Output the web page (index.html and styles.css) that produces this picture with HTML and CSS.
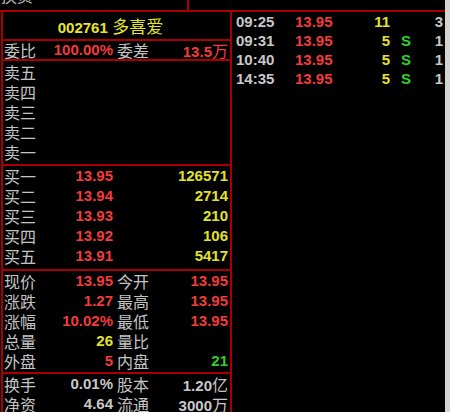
FILE: index.html
```html
<!DOCTYPE html>
<html lang="zh-CN">
<head>
<meta charset="utf-8">
<title>002761 多喜爱</title>
<link rel="stylesheet" href="styles.css">
</head>
<body>
<div class="screen">
  <div class="content">
    <div class="topstrip">
      <div class="prev">
        <span class="lbl">换资</span>
        <span class="num green pv1">13.95</span>
        <span class="num red pv2">1.75</span>
      </div>
    </div>
    <div class="main">
      <div class="quote">
        <div class="title"><span class="code">002761</span> <span class="name">多喜爱</span></div>
        <div class="grid ratio">
          <span class="lbl">委比</span><span class="num red">100.00%</span><span class="lbl l2">委差</span><span class="num red">13.5<span class="unit">万</span></span>
        </div>
        <div class="block sell">
          <div class="grid"><span class="lbl">卖五</span></div>
          <div class="grid"><span class="lbl">卖四</span></div>
          <div class="grid"><span class="lbl">卖三</span></div>
          <div class="grid"><span class="lbl">卖二</span></div>
          <div class="grid"><span class="lbl">卖一</span></div>
        </div>
        <div class="block buy">
          <div class="grid"><span class="lbl">买一</span><span class="num red">13.95</span><span></span><span class="num yellow">126571</span></div>
          <div class="grid"><span class="lbl">买二</span><span class="num red">13.94</span><span></span><span class="num yellow">2714</span></div>
          <div class="grid"><span class="lbl">买三</span><span class="num red">13.93</span><span></span><span class="num yellow">210</span></div>
          <div class="grid"><span class="lbl">买四</span><span class="num red">13.92</span><span></span><span class="num yellow">106</span></div>
          <div class="grid"><span class="lbl">买五</span><span class="num red">13.91</span><span></span><span class="num yellow">5417</span></div>
        </div>
        <div class="block stats">
          <div class="grid"><span class="lbl">现价</span><span class="num red">13.95</span><span class="lbl l2">今开</span><span class="num red">13.95</span></div>
          <div class="grid"><span class="lbl">涨跌</span><span class="num red">1.27</span><span class="lbl l2">最高</span><span class="num red">13.95</span></div>
          <div class="grid"><span class="lbl">涨幅</span><span class="num red">10.02%</span><span class="lbl l2">最低</span><span class="num red">13.95</span></div>
          <div class="grid"><span class="lbl">总量</span><span class="num yellow">26</span><span class="lbl l2">量比</span><span class="num"></span></div>
          <div class="grid"><span class="lbl">外盘</span><span class="num red">5</span><span class="lbl l2">内盘</span><span class="num green">21</span></div>
        </div>
        <div class="block shares">
          <div class="grid"><span class="lbl">换手</span><span class="num gray">0.01%</span><span class="lbl l2">股本</span><span class="num gray">1.20<span class="unit">亿</span></span></div>
          <div class="grid"><span class="lbl">净资</span><span class="num gray">4.64</span><span class="lbl l2">流通</span><span class="num gray">3000<span class="unit">万</span></span></div>
        </div>
      </div>
      <div class="ticks">
        <div class="tick"><span class="time">09:25</span><span class="num red left">13.95</span><span class="num yellow">11</span><span class="side"></span><span class="num gray">3</span></div>
        <div class="tick"><span class="time">09:31</span><span class="num red left">13.95</span><span class="num yellow">5</span><span class="side">S</span><span class="num gray">1</span></div>
        <div class="tick"><span class="time">10:40</span><span class="num red left">13.95</span><span class="num yellow">5</span><span class="side">S</span><span class="num gray">1</span></div>
        <div class="tick"><span class="time">14:35</span><span class="num red left">13.95</span><span class="num yellow">5</span><span class="side">S</span><span class="num gray">1</span></div>
      </div>
    </div>
  </div>
  <div class="scrollbar"></div>
</div>
</body>
</html>
```
FILE: styles.css
```css
html, body {
  margin: 0;
  padding: 0;
  background: #000;
}
body {
  width: 450px;
  height: 412px;
  overflow: hidden;
  font-family: "Liberation Sans", "Noto Sans CJK SC", sans-serif;
}
.screen {
  display: flex;
  width: 450px;
  height: 412px;
  overflow: hidden;
}
.content {
  flex: 1;
  display: flex;
  flex-direction: column;
  min-width: 0;
}
.scrollbar {
  width: 5px;
  background: #d4d4d4;
}
.topstrip {
  height: 10px;
  overflow: hidden;
  flex: none;
}
.prev {
  width: 187px;
  height: 10px;
  border-right: 2px solid #a80000;
  display: flex;
  align-items: flex-end;
  overflow: hidden;
}
.prev > span {
  line-height: 20px;
  height: 20px;
  margin-top: -10px;
  flex: none;
  position: relative;
  top: -5px;
}
.prev .pv1 { margin-left: 50px; }
.prev .pv2 { margin-left: 38px; }

.main {
  flex: 1;
  display: flex;
  border-top: 2px solid #a80000;
  min-height: 0;
}
.quote {
  width: 227px;
  margin-left: 1px;
  border-left: 2px solid #a80000;
  border-right: 2px solid #a80000;
  flex: none;
}
.title {
  height: 27px;
  line-height: 27px;
  text-align: center;
  padding-right: 12px;
  color: #e6e62e;
  border-bottom: 2px solid #a80000;
  white-space: nowrap;
}
.title .code {
  font-weight: bold;
  font-size: 15px;
}
.title .name {
  font-family: "Noto Sans CJK SC", sans-serif;
  font-size: 17px;
}
.grid {
  display: grid;
  grid-template-columns: 37px 73px 37px 78px;
  height: 20px;
  line-height: 20px;
  white-space: nowrap;
}
.ratio {
  height: 18px;
  line-height: 18px;
  border-bottom: 2px solid #a80000;
}
.block {
  border-bottom: 2px solid #a80000;
}
.sell { padding: 1px 0 2px; }
.buy { padding: 0 0 3px; }
.stats { padding: 0 0 1px; }
.shares { border-bottom: none; }

.lbl {
  font-family: "Noto Sans CJK SC", sans-serif;
  font-size: 16px;
  color: #c4c4c4;
  padding-left: 1px;
}
.l2 { padding-left: 4px; }
.num {
  font-weight: bold;
  font-size: 15px;
  text-align: right;
}
.unit {
  font-family: "Noto Sans CJK SC", sans-serif;
  font-weight: normal;
  font-size: 16px;
}
.red { color: #f23c3c; }
.yellow { color: #e2e22e; }
.green { color: #2ed22e; }
.gray { color: #c8c8c8; }

.ticks {
  flex: 1;
  padding-left: 4px;
  padding-top: 0;
}
.tick {
  display: grid;
  grid-template-columns: 59px 60px 35px 25px 28px;
  height: 19px;
  line-height: 19px;
  white-space: nowrap;
}
.time {
  font-weight: bold;
  font-size: 15px;
  color: #c8c8c8;
}
.left { text-align: left; }
.side {
  font-weight: bold;
  font-size: 15px;
  color: #2ed22e;
  padding-left: 11px;
}
```
